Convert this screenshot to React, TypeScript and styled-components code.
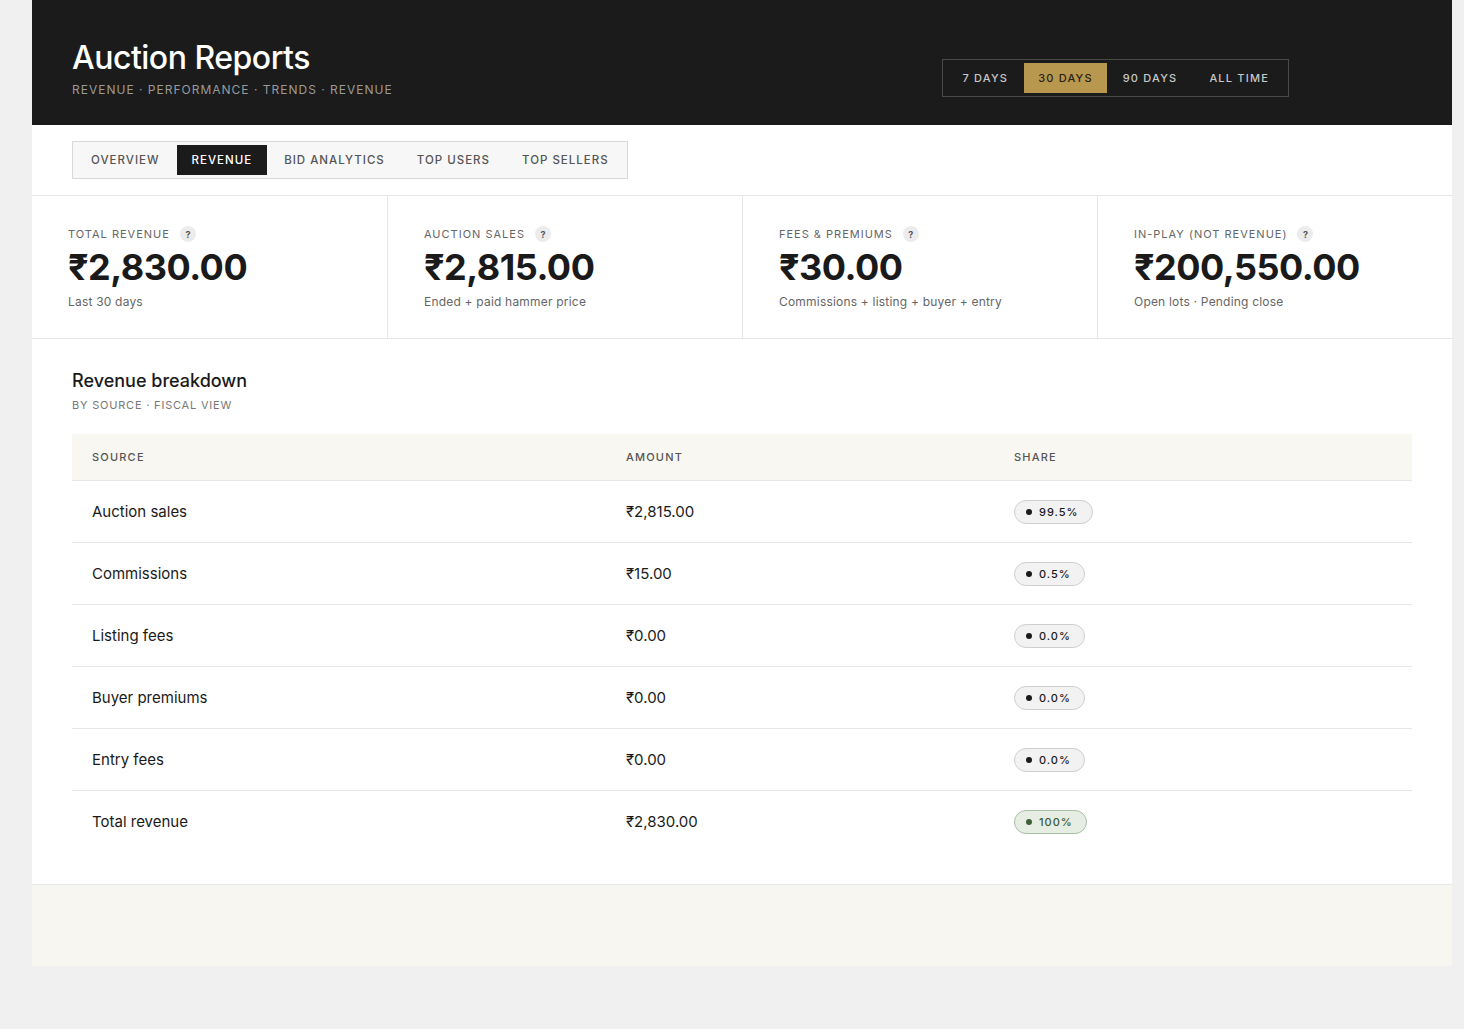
import React from "react";
import styled, { createGlobalStyle } from "styled-components";

const G = createGlobalStyle`
  body { margin: 0; background: #f0f0f0; font-family: Inter, "Noto Sans", sans-serif; }
`;
const Page = styled.div`margin-left: 32px; width: 1420px; background: #fff;`;
const Header = styled.header`
  background: #1b1b1b; height: 125px; box-sizing: border-box; padding: 38px 40px 0 40px;
  display: flex; justify-content: space-between; align-items: flex-start;
`;
const Title = styled.h1`margin: 0; color: #fff; font-size: 32px; font-weight: 500; letter-spacing: -0.5px; line-height: 40px;`;
const Sub = styled.div`color: #9a9a9a; font-size: 12px; letter-spacing: 1px; margin-top: 4px;`;
const Range = styled.div`
  display: flex; border: 1px solid #4a4a4a; padding: 3px; margin-top: 21px; margin-right: 123px; gap: 0;
`;
const RangeBtn = styled.div<{ $on?: boolean }>`
  padding: 0 14px; height: 30px; line-height: 30px; font-size: 11px; letter-spacing: 1.2px; font-weight: 500;
  color: ${p => (p.$on ? "#2a2212" : "#c8c8c8")}; background: ${p => (p.$on ? "#b8974f" : "transparent")};
  ${p => (p.$on ? "" : "padding: 0 16px;")}
`;
const TabBar = styled.div`padding: 16px 40px; border-bottom: 1px solid #e6e6e6;`;
const Tabs = styled.div`display: inline-flex; border: 1px solid #d8d8d8; background: #f7f7f7; padding: 3px; gap: 2px;`;
const Tab = styled.div<{ $on?: boolean }>`
  padding: 0 15px; height: 30px; line-height: 30px; font-size: 11.5px; letter-spacing: 1px; font-weight: 500;
  color: ${p => (p.$on ? "#fff" : "#555")}; background: ${p => (p.$on ? "#1b1b1b" : "transparent")};
`;
const Stats = styled.div`display: grid; grid-template-columns: repeat(4, 1fr); border-bottom: 1px solid #e6e6e6;`;
const Stat = styled.div`padding: 30px 36px 29px; border-left: 1px solid #e6e6e6; &:first-child{border-left:none;}`;
const Label = styled.div`display: flex; align-items: center; gap: 10px; font-size: 11px; letter-spacing: 1px; color: #666;`;
const Q = styled.span`width: 16px; height: 16px; border-radius: 50%; background: #ececec; font-size: 9px; font-weight: 700; display: inline-flex; align-items: center; justify-content: center; color: #555; letter-spacing: 0;`;
const Value = styled.div`font-size: 36px; font-weight: 700; color: #1a1a1a; letter-spacing: -0.5px; margin-top: 2px; line-height: 46px;`;
const Note = styled.div`font-size: 12px; color: #666; margin-top: 4px; letter-spacing: 0.2px;`;
const Section = styled.section`padding: 30px 40px 32px;`;
const H2 = styled.h2`margin: 0; font-size: 18px; font-weight: 500; color: #1a1a1a; line-height: 24px;`;
const Sub2 = styled.div`font-size: 11px; letter-spacing: 0.8px; color: #777; margin-top: 5px;`;
const Table = styled.div`margin-top: 22px;`;
const Row = styled.div<{ $head?: boolean }>`
  display: grid; grid-template-columns: 534px 388px 1fr; align-items: center; padding-left: 20px;
  height: ${p => (p.$head ? "46px" : "61px")}; background: ${p => (p.$head ? "#f9f7f2" : "#fff")};
  border-bottom: 1px solid #e8e8e8; ${p => (p.$head ? "" : "&:last-child{border-bottom:none;}")}
`;
const Th = styled.div`font-size: 11px; letter-spacing: 1.2px; color: #555; font-weight: 500;`;
const Td = styled.div`font-size: 15px; color: #1a1a1a;`;
const Pill = styled.span<{ $g?: boolean }>`
  display: inline-flex; align-items: center; gap: 7px; height: 22px; padding: 0 13px 0 11px; border-radius: 12px;
  border: 1px solid ${p => (p.$g ? "#a9bfa4" : "#cfcfcf")}; background: ${p => (p.$g ? "#e6ede3" : "#f2f2f2")};
  font-size: 11px; letter-spacing: 1px; color: ${p => (p.$g ? "#3b5a36" : "#1a1a1a")}; font-weight: 500;
  &::before { content: ""; width: 6px; height: 6px; border-radius: 50%; background: ${p => (p.$g ? "#3f5f39" : "#1a1a1a")}; }
`;
const Footer = styled.div`height: 81px; background: #f8f6f1; border-top: 1px solid #e8e8e8;`;

const stats = [
  ["TOTAL REVENUE", "₹2,830.00", "Last 30 days"],
  ["AUCTION SALES", "₹2,815.00", "Ended + paid hammer price"],
  ["FEES & PREMIUMS", "₹30.00", "Commissions + listing + buyer + entry"],
  ["IN-PLAY (NOT REVENUE)", "₹200,550.00", "Open lots · Pending close"],
];
const rows = [
  ["Auction sales", "₹2,815.00", "99.5%"],
  ["Commissions", "₹15.00", "0.5%"],
  ["Listing fees", "₹0.00", "0.0%"],
  ["Buyer premiums", "₹0.00", "0.0%"],
  ["Entry fees", "₹0.00", "0.0%"],
  ["Total revenue", "₹2,830.00", "100%"],
];

export default function App() {
  return (
    <>
      <G />
      <Page>
        <Header>
          <div>
            <Title>Auction Reports</Title>
            <Sub>REVENUE · PERFORMANCE · TRENDS · REVENUE</Sub>
          </div>
          <Range>
            {["7 DAYS", "30 DAYS", "90 DAYS", "ALL TIME"].map(r => (
              <RangeBtn key={r} $on={r === "30 DAYS"}>{r}</RangeBtn>
            ))}
          </Range>
        </Header>
        <TabBar>
          <Tabs>
            {["OVERVIEW", "REVENUE", "BID ANALYTICS", "TOP USERS", "TOP SELLERS"].map(t => (
              <Tab key={t} $on={t === "REVENUE"}>{t}</Tab>
            ))}
          </Tabs>
        </TabBar>
        <Stats>
          {stats.map(s => (
            <Stat key={s[0]}>
              <Label>{s[0]}<Q>?</Q></Label>
              <Value>{s[1]}</Value>
              <Note>{s[2]}</Note>
            </Stat>
          ))}
        </Stats>
        <Section>
          <H2>Revenue breakdown</H2>
          <Sub2>BY SOURCE · FISCAL VIEW</Sub2>
          <Table>
            <Row $head><Th>SOURCE</Th><Th>AMOUNT</Th><Th>SHARE</Th></Row>
            {rows.map((r, i) => (
              <Row key={r[0]}>
                <Td>{r[0]}</Td><Td>{r[1]}</Td>
                <div><Pill $g={i === rows.length - 1}>{r[2]}</Pill></div>
              </Row>
            ))}
          </Table>
        </Section>
        <Footer />
      </Page>
    </>
  );
}
